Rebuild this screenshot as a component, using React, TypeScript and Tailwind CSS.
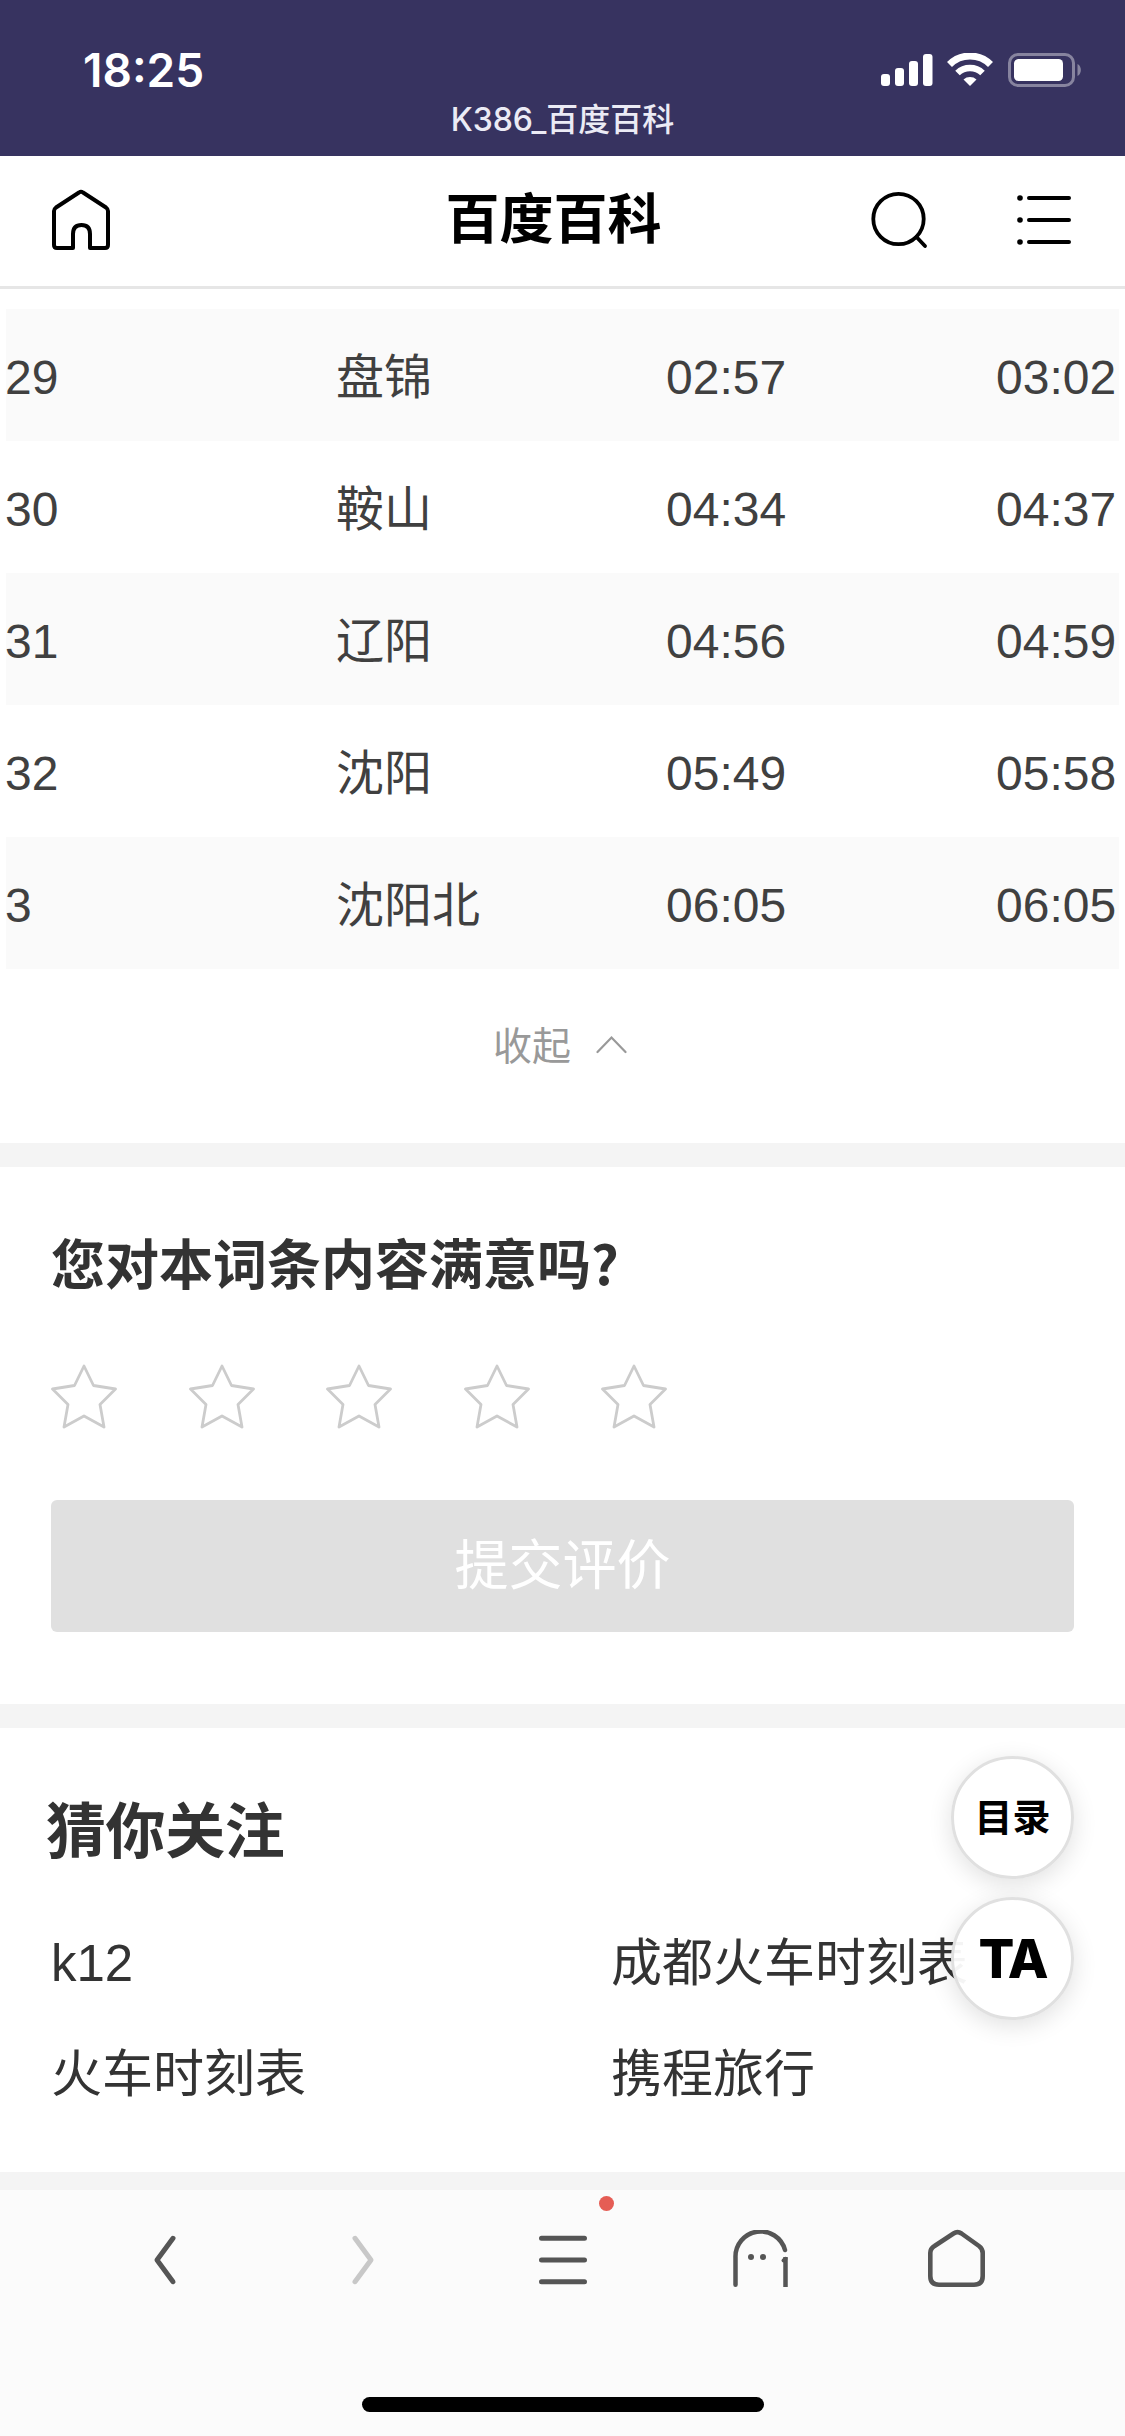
import React from "react";

type StopType = {
  no: string;
  station: string;
  arrive: string;
  depart: string;
};

const stops: StopType[] = [
  { no: "29", station: "盘锦", arrive: "02:57", depart: "03:02" },
  { no: "30", station: "鞍山", arrive: "04:34", depart: "04:37" },
  { no: "31", station: "辽阳", arrive: "04:56", depart: "04:59" },
  { no: "32", station: "沈阳", arrive: "05:49", depart: "05:58" },
  { no: "3", station: "沈阳北", arrive: "06:05", depart: "06:05" },
];

const links = ["k12", "成都火车时刻表", "火车时刻表", "携程旅行"];

const StatusBar = () => {
  return (
    <div className="h-[156px] bg-[#373360] text-white flex flex-col font-['Inter','Noto_Sans_CJK_SC',sans-serif]">
      <div className="h-[101px] pt-[38px] pl-[83px] pr-[44px] flex justify-between items-center">
        <span className="text-[46px] leading-[60px] font-semibold">18:25</span>
        <svg width="200" height="34" viewBox="0 0 200 34" fill="white">
          <rect x="0" y="21" width="9" height="12" rx="3" />
          <rect x="14" y="15" width="9" height="18" rx="3" />
          <rect x="28" y="8" width="9" height="25" rx="3" />
          <rect x="42" y="1" width="9.5" height="32" rx="3" />
          <path
            d="M68.5 11.5 A29 29 0 0 1 109.5 11.5"
            fill="none"
            stroke="white"
            strokeWidth="7"
          />
          <path
            d="M76.5 20 A18 18 0 0 1 101.5 20"
            fill="none"
            stroke="white"
            strokeWidth="6.500"
          />
          <path d="M82.500 26.500 A10 10 0 0 1 95.500 26.500 L89 33 Z" />
          <rect
            x="128.500"
            y="1.500"
            width="64"
            height="31"
            rx="8.500"
            fill="none"
            stroke="white"
            strokeOpacity="0.4"
            strokeWidth="3"
          />
          <rect x="133" y="6" width="49" height="22" rx="4.500" />
          <path
            d="M196.500 11 C201 13 201 21 196.500 23 Z"
            fillOpacity="0.4"
          />
        </svg>
      </div>
      <div className="text-center text-[32px] leading-[38px] font-medium text-[#ebebf5]">
        K386_百度百科
      </div>
    </div>
  );
};

const Header = () => {
  return (
    <header className="h-[133px] border-b-[3px] border-[#e6e6e6] pl-[51px] pr-[53px] pb-[2px] flex items-center justify-between text-black">
      <svg
        width="60"
        height="62"
        viewBox="0 0 60 62"
        fill="none"
        stroke="currentColor"
        strokeWidth="4"
        strokeLinejoin="round"
      >
        <path d="M22 59 H6 Q3 59 3 56 V22 Q3 20 5 18.500 L28 3.500 Q30 2 32 3.500 L55 18.500 Q57 20 57 22 V56 Q57 59 54 59 H39 V45 Q39 36 30.500 36 Q22 36 22 45 Z" />
        <path d="M24.200 59 H36.800" stroke="white" strokeWidth="6" />
      </svg>
      <h1 className="text-[54px] leading-none font-bold pl-[126px]">
        百度百科
      </h1>
      <div className="flex gap-[89px]">
        <svg
          width="58"
          height="58"
          viewBox="0 0 58 58"
          fill="none"
          stroke="currentColor"
          strokeWidth="3.800"
          strokeLinecap="round"
        >
          <circle cx="28.500" cy="28" r="25.200" />
          <path d="M46.500 46 L55 55" />
        </svg>
        <svg
          width="55"
          height="58"
          viewBox="0 0 55 58"
          stroke="currentColor"
          strokeWidth="4"
          strokeLinecap="round"
        >
          <path d="M12 7 H52 M12 29 H52 M12 51 H52" />
          <g stroke="none">
            <circle cx="3" cy="7" r="2.800" />
            <circle cx="3" cy="29" r="2.800" />
            <circle cx="3" cy="51" r="2.800" />
          </g>
        </svg>
      </div>
    </header>
  );
};

const StopTable = () => {
  return (
    <section className="pt-5 h-[854px] text-[48px] text-[#404040]">
      <div className="mx-[6px]">
        {stops.map((stop) => (
          <div
            key={stop.no}
            className="h-[132px] pt-[5px] grid grid-cols-[330px_330px_330px_1fr] items-center odd:bg-[#fafafa]"
          >
            <span className="-ml-px">{stop.no}</span>
            <span>{stop.station}</span>
            <span>{stop.arrive}</span>
            <span>{stop.depart}</span>
          </div>
        ))}
      </div>
      <div className="mt-[50px] pr-[5px] flex items-center justify-center gap-[25px] text-[39px] leading-[56px] text-[#999]">
        <span>收起</span>
        <svg
          className="-mt-[5px]"
          width="31"
          height="20"
          viewBox="0 0 31 20"
          fill="none"
          stroke="currentColor"
          strokeWidth="2.200"
          strokeLinecap="round"
        >
          <path d="M1.500 17 L15.500 2.500 L29.500 17" />
        </svg>
      </div>
    </section>
  );
};

const Star = () => {
  return (
    <svg
      width="66"
      height="65"
      viewBox="0 0 66 65"
      fill="none"
      stroke="#ccc"
      strokeWidth="2.800"
      strokeLinejoin="round"
    >
      <path d="M33 2 L42.500 21.500 L64.500 25 L49 40.500 L53 63 L33 52 L13 63 L17 40.500 L1.500 25 L23.500 21.500 Z" />
    </svg>
  );
};

const Rating = () => {
  return (
    <section className="h-[537px] pt-[67px] px-[51px]">
      <h2 className="text-[54px] leading-[56px] font-bold text-[#333] font-['Noto_Sans_CJK_SC',sans-serif]">
        您对本词条内容满意吗?
      </h2>
      <div className="mt-[74px] flex gap-[71.6px]">
        {[1, 2, 3, 4, 5].map((n) => (
          <Star key={n} />
        ))}
      </div>
      <button className="mt-[71px] w-full h-[132px] rounded-[6px] bg-[#e0e0e0] text-white text-[54px] leading-none">
        提交评价
      </button>
    </section>
  );
};

const Related = () => {
  return (
    <section className="relative h-[444px] pt-[72px] px-[51px] text-[#333]">
      <h2 className="-ml-[5px] text-[60px] leading-[66px] font-bold tracking-[-0.4px]">
        猜你关注
      </h2>
      <div className="mt-[42px] grid grid-cols-[560px_1fr] text-[51px] leading-[111px] whitespace-nowrap">
        {links.map((link) => (
          <span key={link}>{link}</span>
        ))}
      </div>
      {/* floating buttons */}
      <div className="absolute right-[51px] top-[28px] flex flex-col gap-[18px] text-black">
        <button className="size-[123px] rounded-full border-[3px] border-[#e0e0e0] bg-white/95 shadow-[0_6px_24px_rgba(0,0,0,0.12)] text-[38px] leading-none font-bold">
          目录
        </button>
        <button className="size-[123px] rounded-full border-[3px] border-[#e0e0e0] bg-white/95 shadow-[0_6px_24px_rgba(0,0,0,0.12)] text-[53px] leading-none font-extrabold tracking-[-2px] pt-[2px] font-['Inter',sans-serif]">
          TA
        </button>
      </div>
    </section>
  );
};

const Toolbar = () => {
  return (
    <nav className="h-[246px] bg-[#fbfbfb] text-[#555] flex flex-col items-center justify-between pt-[40px] pb-6">
      <div className="w-full px-[135px] flex justify-between">
        <svg width="60" height="60" viewBox="0 0 60 60" fill="none" stroke="currentColor" strokeWidth="5" strokeLinecap="round" strokeLinejoin="round">
          <path d="M38 8.300 L22 30 L38 51.700" />
        </svg>
        <svg width="60" height="60" viewBox="0 0 60 60" fill="none" stroke="#c8c8c8" strokeWidth="5" strokeLinecap="round" strokeLinejoin="round">
          <path d="M21 8.300 L37 30 L21 51.700" />
        </svg>
        <div className="relative">
          <svg width="60" height="60" viewBox="0 0 60 60" stroke="currentColor" strokeWidth="5" strokeLinecap="round">
            <path d="M8.500 8.300 H51.500 M8.500 30 H51.500 M8.500 51.700 H51.500" />
          </svg>
          <span className="absolute left-[66px] top-[-34px] size-[15px] rounded-full bg-[#e55d55]" />
        </div>
        <svg width="60" height="60" viewBox="0 0 60 60" fill="none" stroke="currentColor" strokeWidth="4.500" strokeLinecap="round">
          <path d="M4.500 54.700 V27.500 A25.200 25.200 0 0 1 54 20" />
          <path d="M54.500 27 V57" strokeLinecap="butt" />
          <path d="M52.500 30.500 L54.500 28.800" strokeWidth="4" />
          <g fill="currentColor" stroke="none">
            <circle cx="20" cy="27" r="3" />
            <circle cx="32" cy="27" r="3" />
          </g>
        </svg>
        <svg className="overflow-visible" width="60" height="60" viewBox="0 0 60 60" fill="none" stroke="currentColor" strokeWidth="4.600" strokeLinejoin="round">
          <path d="M23.500 3.500 Q27.500 .8 31.500 3.500 L49 16 Q52.700 18.800 52.700 23 V46 Q52.700 54.700 44 54.700 H9 Q.3 54.700 .3 46 V23 Q.3 18.500 4.500 16 Z" />
        </svg>
      </div>
      <div className="w-[402px] h-[15px] rounded-full bg-black" />
    </nav>
  );
};

export default function App() {
  return (
    <div className="w-[1125px] h-[2436px] overflow-hidden bg-white flex flex-col font-['Liberation_Sans','Noto_Sans_CJK_SC',sans-serif]">
      <StatusBar />
      <Header />
      <StopTable />
      <div className="h-6 bg-[#f4f4f4]" />
      <Rating />
      <div className="h-6 bg-[#f4f4f4]" />
      <Related />
      <div className="h-[18px] bg-[#f4f4f4]" />
      <Toolbar />
    </div>
  );
}
